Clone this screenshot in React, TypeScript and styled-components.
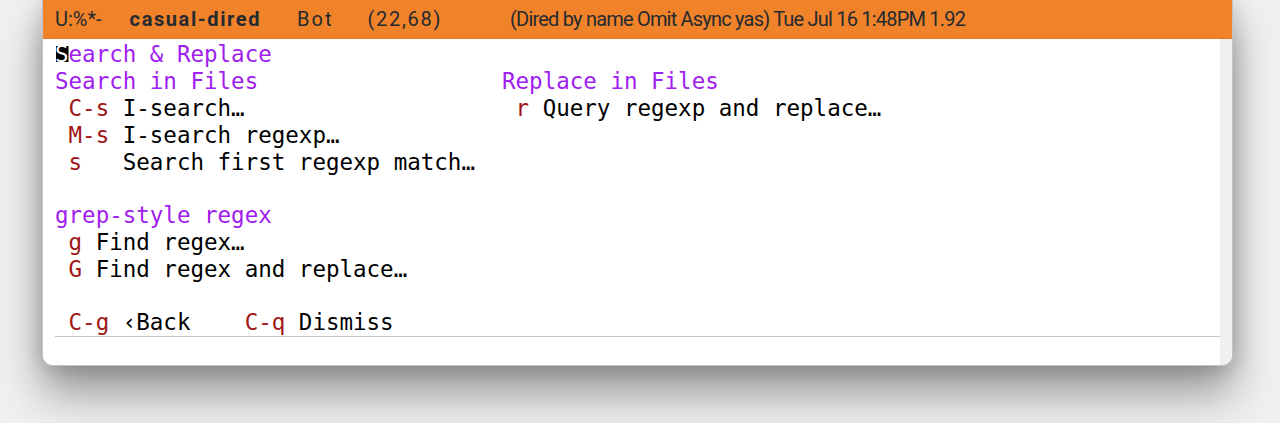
import React from "react";
import styled, { createGlobalStyle } from "styled-components";

const GlobalStyle = createGlobalStyle`
  html, body { margin: 0; padding: 0; }
  body {
    background: #efefef;
    width: 1280px;
    height: 423px;
    overflow: hidden;
  }
`;

const Desk = styled.div`
  width: 1280px;
  height: 423px;
  padding-left: 42px;
  box-sizing: border-box;
  background: #f0f0f0;
`;

const Window = styled.div`
  width: 1191px;
  height: 366px;
  display: flex;
  flex-direction: column;
  background: #ffffff;
  border: 1px solid #c4c4c4;
  border-top: none;
  box-sizing: border-box;
  border-radius: 0 0 11px 11px;
  overflow: hidden;
  box-shadow: 0 28px 44px rgba(0, 0, 0, 0.36), 0 2px 22px rgba(0, 0, 0, 0.2);
`;

const ModeLine = styled.div`
  height: 39px;
  flex: none;
  display: flex;
  align-items: center;
  padding-left: 12px;
  background: #f0822a;
  border-bottom: 1px solid #e4782a;
  box-sizing: border-box;
  font-family: Roboto, "Noto Sans", sans-serif;
  font-size: 20px;
  color: #252a2f;
  white-space: pre;
`;

const ModeItem = styled.span<{ $left: number; $bold?: boolean; $track?: number }>`
  margin-left: ${(p) => p.$left}px;
  font-weight: ${(p) => (p.$bold ? 700 : 400)};
  letter-spacing: ${(p) => p.$track ?? 0}px;
`;

const Main = styled.div`
  flex: 1;
  display: flex;
  min-height: 0;
`;

const Text = styled.div`
  flex: 1;
  display: flex;
  flex-direction: column;
  padding: 2px 0 0 12px;
  font-family: "DejaVu Sans Mono", "Liberation Mono", monospace;
  font-size: 22.5px;
  line-height: 27px;
  color: #000;
`;

const Fringe = styled.div`
  width: 12px;
  flex: none;
  background: #f0f0f0;
`;

const Line = styled.div`
  height: 27px;
  white-space: pre;
`;

const Heading = styled.span`
  color: #a020f0;
`;

const Key = styled.span`
  color: #a01616;
`;

const Cursor = styled.span`
  color: #fff;
  background: linear-gradient(#000, #000) no-repeat;
  background-size: 12.5px 16px;
  background-position: 0.5px 5px;
`;

const Columns = styled.div`
  display: grid;
  grid-template-columns: 33ch 1fr;
`;

const Column = styled.div`
  display: flex;
  flex-direction: column;
`;

const Divider = styled.div`
  height: 1px;
  background: #c6c6c6;
  flex: none;
  margin-left: 12px;
`;

const EchoArea = styled.div`
  height: 28px;
  flex: none;
  background: #fff;
`;

const BodyArea = styled.div`
  flex: 1;
  display: flex;
  flex-direction: column;
  min-width: 0;
`;

type Cmd = { k: string; pad?: string; label: string };

const CmdLine: React.FC<Cmd> = ({ k, pad = " ", label }) => (
  <Line>
    {" "}
    <Key>{k}</Key>
    {pad}
    {label}
  </Line>
);

export default function App() {
  return (
    <>
      <GlobalStyle />
      <Desk>
        <Window>
          <ModeLine>
            <ModeItem $left={0}>U:%*-</ModeItem>
            <ModeItem $left={28} $bold $track={1.6}>casual-dired</ModeItem>
            <ModeItem $left={36} $track={2}>Bot</ModeItem>
            <ModeItem $left={34} $track={1.7}>(22,68)</ModeItem>
            <ModeItem $left={68} $track={-0.8}>
              (Dired by name Omit Async yas) Tue Jul 16 1:48PM 1.92
            </ModeItem>
          </ModeLine>
          <Main>
            <BodyArea>
              <Main>
                <Text>
                  <Line>
                    <Heading>
                      <Cursor>S</Cursor>earch &amp; Replace
                    </Heading>
                  </Line>
                  <Columns>
                    <Column>
                      <Line>
                        <Heading>Search in Files</Heading>
                      </Line>
                      <CmdLine k="C-s" label="I-search…" />
                      <CmdLine k="M-s" label="I-search regexp…" />
                      <CmdLine k="s" pad="   " label="Search first regexp match…" />
                    </Column>
                    <Column>
                      <Line>
                        <Heading>Replace in Files</Heading>
                      </Line>
                      <CmdLine k="r" label="Query regexp and replace…" />
                    </Column>
                  </Columns>
                  <Line />
                  <Line>
                    <Heading>grep-style regex</Heading>
                  </Line>
                  <CmdLine k="g" label="Find regex…" />
                  <CmdLine k="G" label="Find regex and replace…" />
                  <Line />
                  <Line>
                    {" "}
                    <Key>C-g</Key> ‹Back    <Key>C-q</Key> Dismiss
                  </Line>
                </Text>
              </Main>
              <Divider />
              <EchoArea />
            </BodyArea>
            <Fringe />
          </Main>
        </Window>
      </Desk>
    </>
  );
}
